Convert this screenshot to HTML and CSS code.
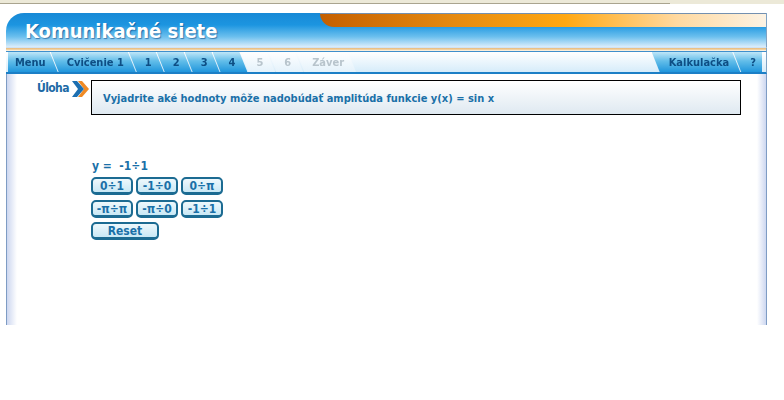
FILE: index.html
```html
<!DOCTYPE html>
<html lang="sk">
<head>
<meta charset="utf-8">
<title>Komunikačné siete</title>
<link rel="stylesheet" href="styles.css">
</head>
<body>
<div class="topstrip"><div class="ts-left"></div><div class="ts-right"></div></div>
<div class="frame">
  <div class="banner">
    <div class="orange"></div>
    <h1 class="title">Komunikačné siete</h1>
  </div>
  <div class="sep"></div>
  <div class="tabbar">
    <nav class="tabs">
      <span class="tab first">Menu</span>
      <span class="tab">Cvičenie 1</span>
      <span class="tab">1</span>
      <span class="tab">2</span>
      <span class="tab">3</span>
      <span class="tab">4</span>
      <span class="tab off">5</span>
      <span class="tab off">6</span>
      <span class="tab off">Záver</span>
    </nav>
    <nav class="tabs right">
      <span class="tab">Kalkulačka</span>
      <span class="tab last">?</span>
    </nav>
  </div>
  <div class="content">
    <div class="task-row">
      <div class="label"><span class="label-text">Úloha</span>
        <svg class="arrow" width="18" height="16" viewBox="0 0 18 16">
          <polygon points="7,0 11,0 18,8 11,16 7,16 13,8" fill="#f08a24"/>
          <polygon points="1,0 6,0 13,8 6,16 1,16 7,8" fill="#1d6fb0"/>
        </svg>
      </div>
      <div class="taskbox">Vyjadrite aké hodnoty môže nadobúdať amplitúda funkcie y(x) = sin x</div>
    </div>
    <div class="quiz">
      <div class="answer">y =&nbsp; -1÷1</div>
      <div class="grid">
        <button class="btn">0÷1</button>
        <button class="btn">-1÷0</button>
        <button class="btn">0÷π</button>
        <button class="btn">-π÷π</button>
        <button class="btn">-π÷0</button>
        <button class="btn">-1÷1</button>
      </div>
      <button class="btn reset">Reset</button>
    </div>
  </div>
</div>
</body>
</html>
```
FILE: styles.css
```css
* { box-sizing: border-box; }
body {
  margin: 0;
  background: #fff;
  font-family: "DejaVu Sans Condensed", "DejaVu Sans", sans-serif;
  font-stretch: condensed;
}
.topstrip { display: flex; height: 4px; background: #ece9d8; }
.ts-left { width: 670px; border-bottom: 1px solid #a9a48f; }
.ts-right { flex: 1; }

.frame { width: 761px; margin: 9px 0 0 6px; }
.banner {
  position: relative;
  height: 34px;
  border-radius: 18px 0 0 0;
  border-right: 1px solid #7fa3c4;
  background: linear-gradient(#1789d6 0%, #1c95e0 35%, #6cc0ee 70%, #dceefb 100%);
  overflow: hidden;
}
.orange {
  position: absolute;
  left: 314px; right: 0; top: 0;
  height: 14px;
  border-radius: 0 0 0 14px;
  border-top: 1px solid #7390b0;
  background: linear-gradient(90deg, #c45f00 0%, #e58a10 30%, #ffa812 55%, #ffd9a0 80%, #fdf3e4 100%);
}
.title {
  margin: 0;
  padding: 6px 0 0 19px;
  font-size: 20px;
  font-weight: bold;
  color: #fff;
  text-shadow: 1px 1px 1px rgba(0, 50, 110, .5);
  line-height: 24px;
}
.sep {
  height: 5px;
  border-top: 1px solid #cfe3f5;
  border-bottom: 1px solid #3f8fcc;
  background: linear-gradient(#e7b878, #f3d6a8 60%, #fff);
  border-right: 1px solid #7fa3c4;
}
.tabbar {
  display: flex;
  justify-content: space-between;
  height: 22px;
  padding: 0 4px 0 2px;
  background: linear-gradient(#ffffff, #d6ecfa);
  border-bottom: 2px solid #1c7fc6;
  border-right: 1px solid #7fa3c4;
}
.tabs { display: flex; }
.tab {
  display: flex;
  align-items: center;
  height: 20px;
  margin-right: -7px;
  padding: 0 12px 0 16px;
  font-size: 11px;
  font-weight: bold;
  color: #0e4e84;
  background: linear-gradient(#bfe6f8 0%, #62bde9 45%, #2096dc 100%);
  clip-path: polygon(0 0, calc(100% - 8px) 0, 100% 100%, 8px 100%);
  filter: drop-shadow(1px 0 0 #9ab8cc);
}
.tab.first { padding-left: 7px; clip-path: polygon(0 0, calc(100% - 8px) 0, 100% 100%, 0 100%); }
.tab.off {
  color: #b8c4cc;
  background: linear-gradient(#ffffff, #e4f2fb);
}
.tabs.right .tab { padding: 0 11px 0 17px; }
.tabs.right .tab.last { padding: 0 6px 0 17px; margin-right: 0; clip-path: polygon(0 0, 100% 0, 100% 100%, 8px 100%); }

.content {
  height: 251px;
  border-left: 1px solid #7e9cc4;
  border-right: 1px solid #7e9cc4;
  background:
    linear-gradient(90deg, #cdd7f0, #ffffff 10px, #ffffff calc(100% - 9px), #cdd7f0);
  padding: 6px 25px 0 30px;
}
.task-row { display: flex; align-items: flex-start; }
.label {
  display: flex;
  align-items: flex-start;
  width: 54px;
  font-size: 12px;
  font-weight: bold;
  color: #1d6aa6;
  line-height: 14px;
  padding-top: 1px;
}
.label-text { letter-spacing: -0.6px; }
.arrow { margin: 0 0 0 2px; flex: none; }
.taskbox {
  flex: 1;
  height: 35px;
  border: 1px solid #000;
  background: linear-gradient(#ffffff, #dfe9f1);
  padding: 2px 11px 0;
  display: flex;
  align-items: center;
  font-size: 11px;
  font-weight: bold;
  color: #1a70a8;
}
.quiz { padding: 44px 0 0 54px; }
.answer {
  font-size: 12px;
  font-weight: bold;
  color: #1a70a8;
  line-height: 14px;
  padding-left: 1px;
  margin-bottom: 4px;
}
.grid {
  display: grid;
  grid-template-columns: repeat(3, 42px);
  column-gap: 3px;
  row-gap: 5px;
  margin-bottom: 4px;
}
.btn {
  display: block;
  width: 42px;
  height: 18px;
  margin: 0;
  padding: 0;
  border: 2px solid #1c6b92;
  border-bottom-width: 3px;
  border-radius: 5px;
  background: linear-gradient(#eef8fc, #c9e8f5);
  font-family: inherit;
  font-stretch: condensed;
  font-size: 12px;
  font-weight: bold;
  color: #1a70a8;
  line-height: 12px;
}
.btn.reset { width: 68px; }
```
